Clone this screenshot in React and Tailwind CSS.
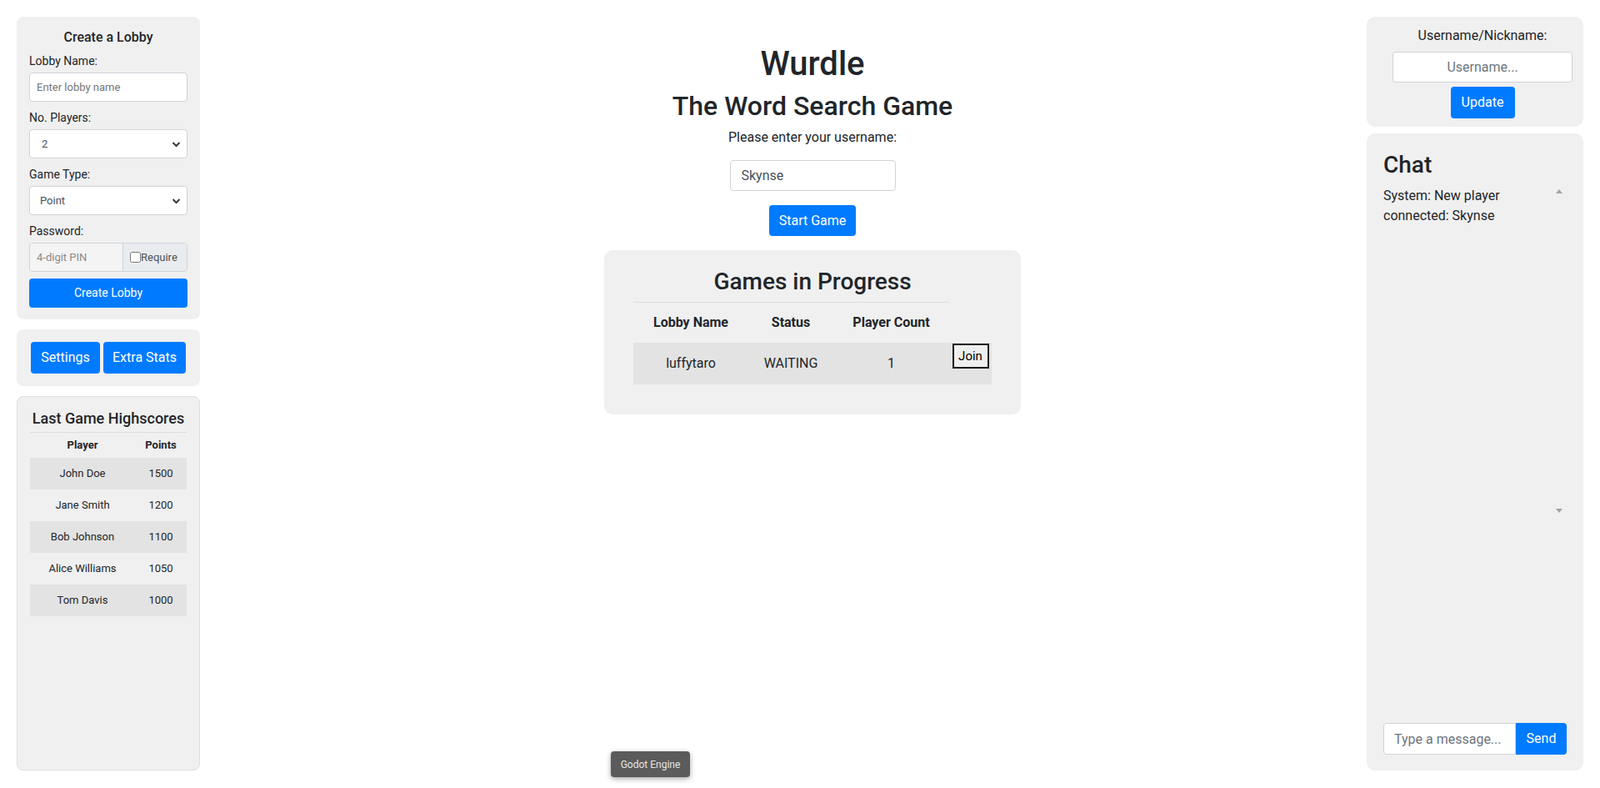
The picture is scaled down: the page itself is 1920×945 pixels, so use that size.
import React from "react";

function Chevron() {
  return (
    <svg className="pointer-events-none absolute right-[8px] top-1/2 -translate-y-1/2" width="11" height="8" viewBox="0 0 11 8">
      <path d="M1.5 2 L5.5 6 L9.5 2" fill="none" stroke="#343a40" strokeWidth="2" />
    </svg>
  );
}

const scores = [
  ["John Doe", "1500"],
  ["Jane Smith", "1200"],
  ["Bob Johnson", "1100"],
  ["Alice Williams", "1050"],
  ["Tom Davis", "1000"],
];

export default function App() {
  return (
    <div className="relative flex h-[945px] w-[1920px] bg-white px-[20px] pt-[20px] pb-[21px] font-['Roboto',sans-serif] text-[#212529]">
      {/* Left column */}
      <div className="flex w-[220px] flex-col gap-[12px]">
        <div className="h-[363px] rounded-[8px] bg-[#f0f0f0] px-[15px] pt-[13px]">
          <div className="text-center text-[16px] leading-[24px] font-medium">Create a Lobby</div>
          <label className="mt-[6px] block text-[14px] leading-[21px]">Lobby Name:</label>
          <input
            className="mt-[3px] block h-[35px] w-full rounded-[4px] border border-[#ced4da] bg-white px-[8px] text-[13px] outline-none placeholder:text-[#757575]"
            placeholder="Enter lobby name"
          />
          <label className="mt-[9px] block text-[14px] leading-[21px]">No. Players:</label>
          <div className="relative mt-[3px] h-[35px]">
            <select className="block h-full w-full appearance-none rounded-[4px] border border-[#ced4da] bg-white pl-[14px] text-[13px] text-[#495057] outline-none">
              <option>2</option>
            </select>
            <Chevron />
          </div>
          <label className="mt-[9px] block text-[14px] leading-[21px]">Game Type:</label>
          <div className="relative mt-[3px] h-[35px]">
            <select className="block h-full w-full appearance-none rounded-[4px] border border-[#ced4da] bg-white pl-[12px] text-[13px] text-[#495057] outline-none">
              <option>Point</option>
            </select>
            <Chevron />
          </div>
          <label className="mt-[9px] block text-[14px] leading-[21px]">Password:</label>
          <div className="mt-[3px] flex h-[35px] rounded-[4px] border border-[#ced4da]">
            <input
              disabled
              className="h-full w-[111px] rounded-l-[4px] bg-[#f4f4f4] px-[8px] text-[13px] outline-none placeholder:text-[#8a8a8a]"
              placeholder="4-digit PIN"
            />
            <div className="flex flex-1 items-center rounded-r-[4px] border-l border-[#ced4da] bg-[#e9ecef] pl-[8px] text-[13px] text-[#495057]">
              <input type="checkbox" className="m-0 h-[13px] w-[13px]" />
              <span>Require</span>
            </div>
          </div>
          <button className="mt-[8px] block h-[35px] w-full rounded-[4px] bg-[#007bff] text-[14px] text-white">Create Lobby</button>
        </div>

        <div className="flex h-[68px] items-center justify-center gap-[4px] rounded-[8px] bg-[#f0f0f0]">
          <button className="h-[38px] w-[83px] rounded-[4px] bg-[#007bff] text-[16px] text-white">Settings</button>
          <button className="h-[38px] w-[99px] rounded-[4px] bg-[#007bff] text-[16px] text-white">Extra Stats</button>
        </div>

        <div className="flex-1 rounded-[8px] border border-[#dcdee2] bg-[#f0f0f0] px-[15px] pt-[12px]">
          <div className="text-center text-[18px] leading-[27px] font-medium">Last Game Highscores</div>
          <div className="mt-[3px] border-t border-[#dcdcdc]" />
          <div className="flex h-[30px] items-center text-[13px] font-bold">
            <div className="w-[126px] text-center">Player</div>
            <div className="flex-1 text-center">Points</div>
          </div>
          {scores.map(([n, p], i) => (
            <div key={n} className={`flex h-[38px] items-center text-[13px] ${i % 2 === 0 ? "bg-[#e3e3e3]" : ""}`}>
              <div className="w-[126px] text-center">{n}</div>
              <div className="flex-1 text-center">{p}</div>
            </div>
          ))}
        </div>
      </div>

      {/* Center column */}
      <div className="flex flex-1 flex-col items-center pl-[70px]">
        <h1 className="mt-[33px] text-[40px] leading-[48px] font-medium">Wurdle</h1>
        <h2 className="mt-[7px] text-[32px] leading-[38px] font-medium">The Word Search Game</h2>
        <p className="mt-[7px] text-[16px] leading-[24px]">Please enter your username:</p>
        <input
          defaultValue="Skynse"
          className="mt-[15px] h-[37px] w-[199px] rounded-[4px] border border-[#ced4da] bg-white px-[13px] text-[16px] text-[#495057] outline-none"
        />
        <button className="mt-[17px] h-[37px] w-[104px] rounded-[4px] bg-[#007bff] text-[16px] text-white">Start Game</button>

        <div className="mt-[17px] h-[197px] w-[500px] rounded-[10px] bg-[#f0f0f0] px-[35px] pt-[21px]">
          <div className="text-center text-[28px] leading-[34px] font-medium">Games in Progress</div>
          <div className="mt-[7px] w-[379px] border-t border-[#dcdee2]" />
          <div className="flex h-[48px] w-[379px] items-center text-[16px] font-bold">
            <div className="w-[138px] text-center">Lobby Name</div>
            <div className="w-[102px] text-center">Status</div>
            <div className="flex-1 text-center">Player Count</div>
          </div>
          <div className="flex h-[50px] w-[430px] bg-[#e3e3e3] text-[16px]">
            <div className="flex w-[138px] items-center justify-center">luffytaro</div>
            <div className="flex w-[102px] items-center justify-center">WAITING</div>
            <div className="flex w-[139px] items-center justify-center">1</div>
            <div className="flex flex-1 justify-center pt-[1px]">
              <button className="h-[30px] w-[44px] border-2 border-[#1a1a1a] bg-[#efefef] text-[15px] text-black">Join</button>
            </div>
          </div>
        </div>
      </div>

      {/* Right column */}
      <div className="flex w-[260px] flex-col gap-[8px]">
        <div className="flex h-[132px] flex-col items-center rounded-[10px] bg-[#f0f0f0] pt-[11px] pl-[28px] pr-[10px]">
          <div className="text-[16px] leading-[24px]">Username/Nickname:</div>
          <input
            className="mt-[7px] h-[37px] w-[216px] rounded-[4px] border border-[#ced4da] bg-white text-center text-[16px] outline-none placeholder:text-[#6c757d]"
            placeholder="Username..."
          />
          <button className="mt-[5px] h-[38px] w-[77px] rounded-[4px] bg-[#007bff] text-[16px] text-white">Update</button>
        </div>

        <div className="flex flex-1 flex-col rounded-[10px] bg-[#f0f0f0] px-[20px] pt-[21px] pb-[19px]">
          <div className="text-[28px] leading-[34px] font-medium">Chat</div>
          <div className="relative mt-[8px] flex-1">
            <div className="pr-[24px] text-[16px] leading-[24px]">
              System: New player
              <br />
              connected: Skynse
            </div>
            <svg className="absolute right-[5px] top-[4px]" width="8" height="5" viewBox="0 0 8 5">
              <path d="M0 5 L4 0 L8 5 Z" fill="#a3a3a3" />
            </svg>
            <svg className="absolute right-[5px] top-[387px]" width="8" height="5" viewBox="0 0 8 5">
              <path d="M0 0 L8 0 L4 5 Z" fill="#a3a3a3" />
            </svg>
          </div>
          <div className="flex h-[38px]">
            <input
              className="h-full w-[159px] rounded-l-[4px] border border-[#ced4da] bg-white px-[12px] text-[16px] outline-none placeholder:text-[#6c757d]"
              placeholder="Type a message..."
            />
            <button className="h-full flex-1 rounded-r-[4px] bg-[#007bff] text-[16px] text-white">Send</button>
          </div>
        </div>
      </div>

      <div className="absolute left-[733px] top-[901px] flex h-[31px] w-[95px] items-center justify-center rounded-[4px] bg-[#5b5b5b] text-[12px] text-[#e6e6e6] shadow-[0_2px_6px_rgba(0,0,0,0.35)]">
        Godot Engine
      </div>
    </div>
  );
}
